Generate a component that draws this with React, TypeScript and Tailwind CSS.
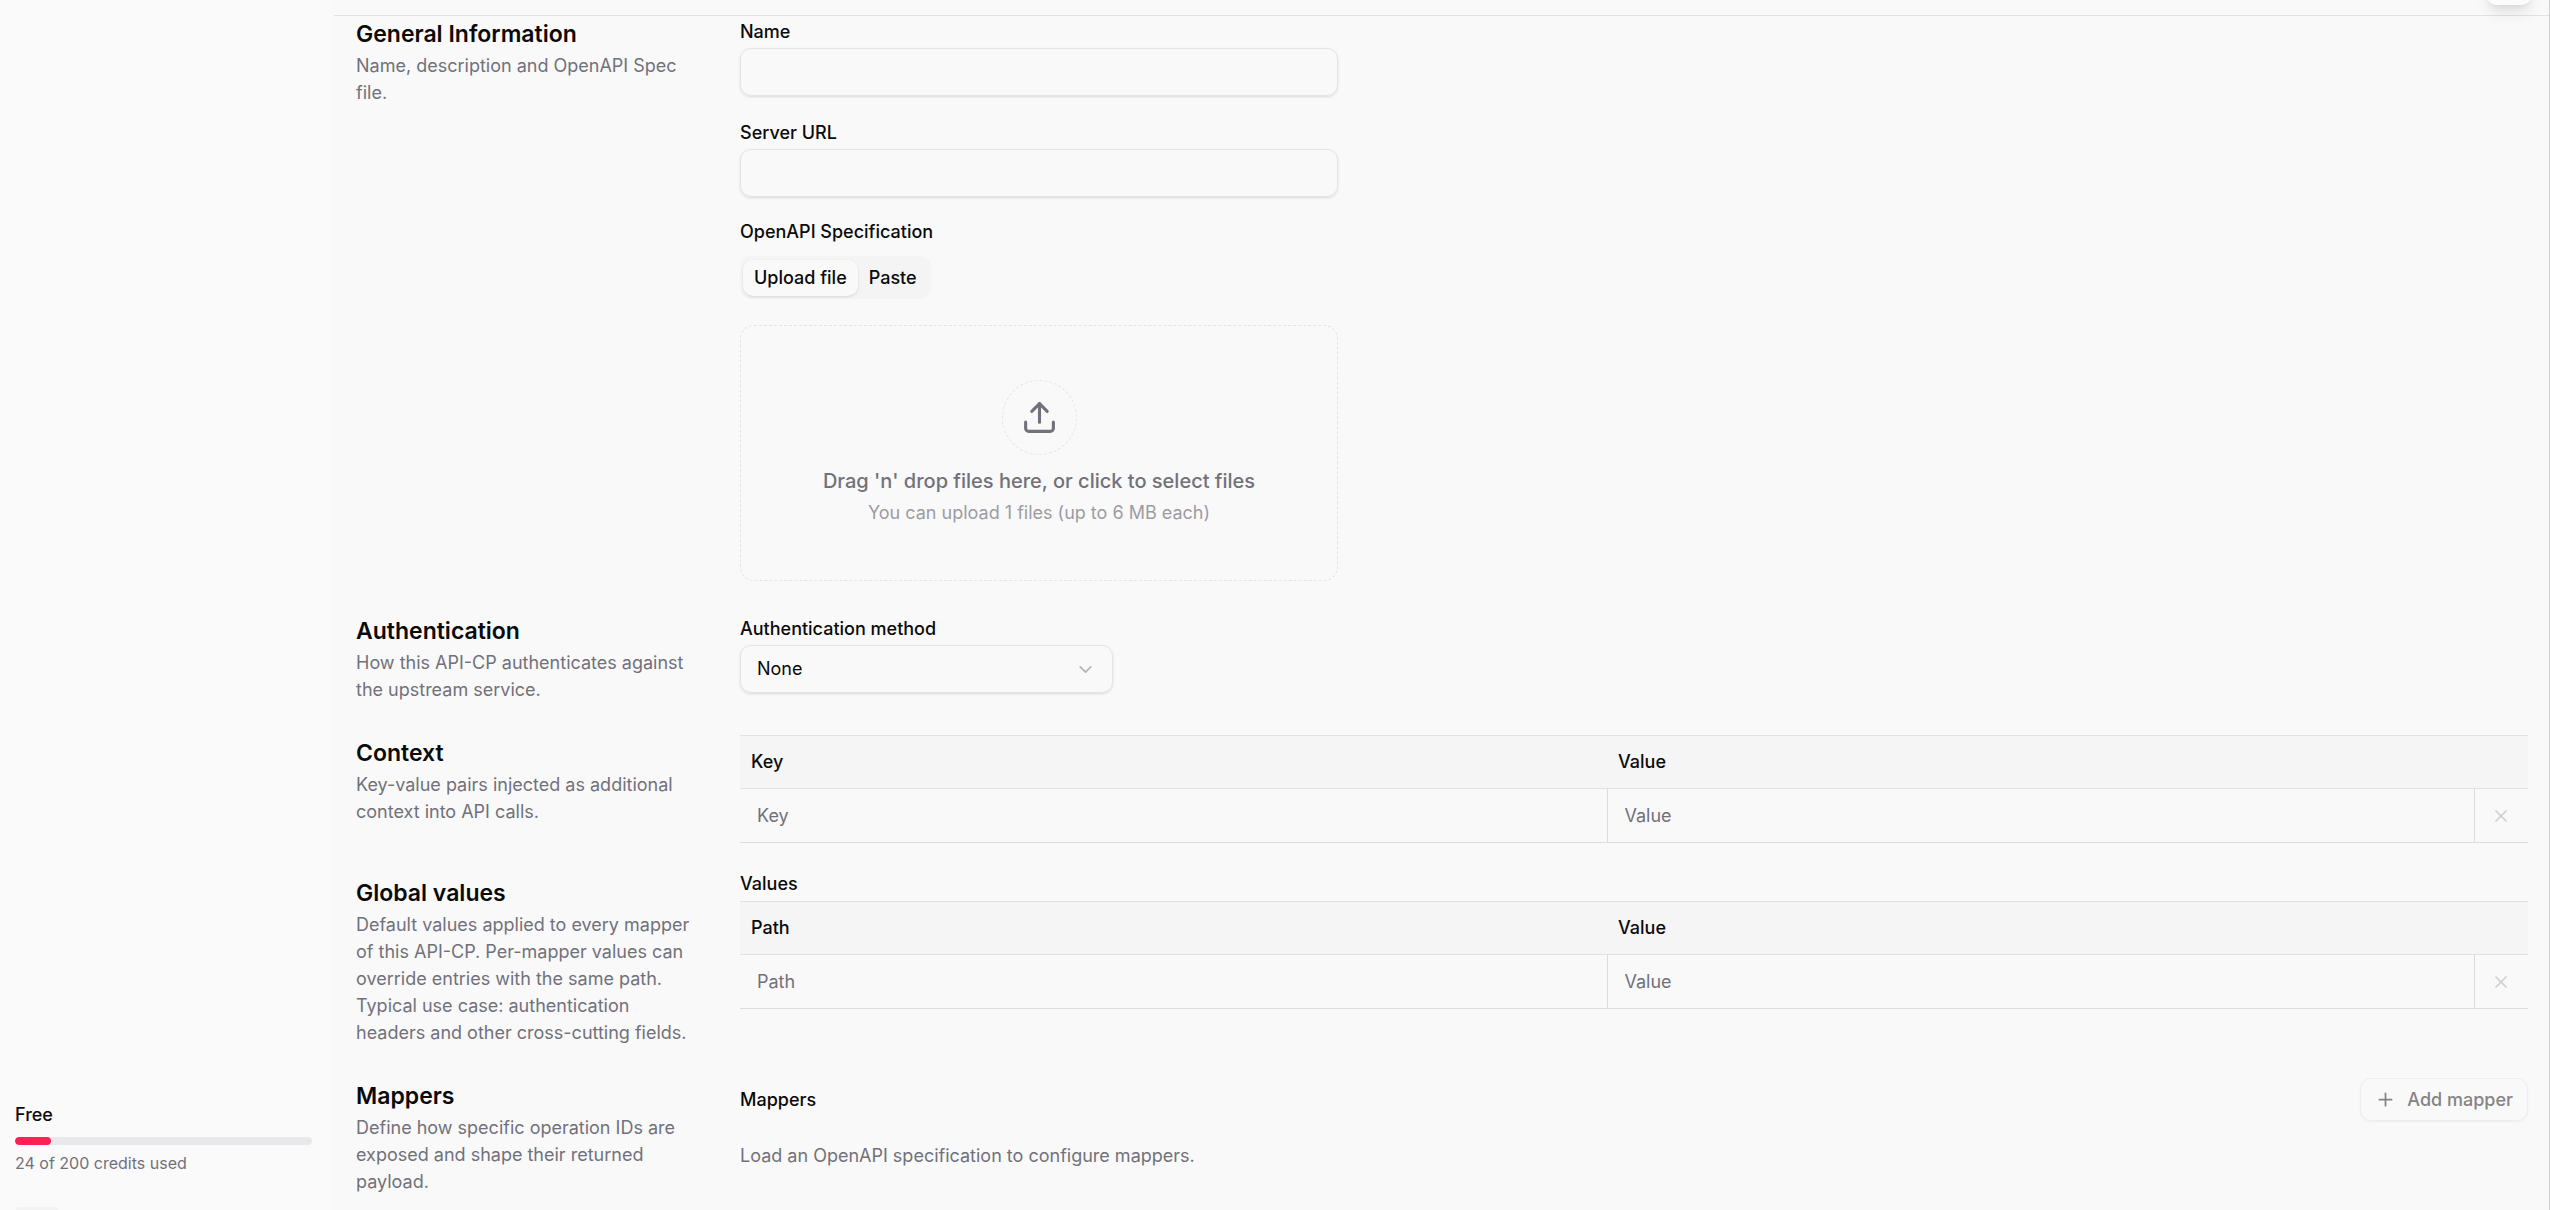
import { useState, type ReactNode } from "react";
import { ChevronDown, Plus, Upload, X } from "lucide-react";

function Section({
  title,
  description,
  children,
}: {
  title: string;
  description: string;
  children: ReactNode;
}) {
  return (
    <section className="grid grid-cols-[341px_minmax(0,1fr)] gap-x-[43px]">
      <div>
        <h2 className="text-[23px] leading-9 font-semibold text-[#0a0a0b]">{title}</h2>
        <p className="text-lg leading-[27px] text-[#71717b]">{description}</p>
      </div>
      <div className="min-w-0">{children}</div>
    </section>
  );
}

function TextField({ id, label }: { id: string; label: string }) {
  return (
    <div className="max-w-[598px]">
      <label htmlFor={id} className="block text-lg leading-8 font-medium">
        {label}
      </label>
      <input
        id={id}
        type="text"
        className="block h-12 w-full rounded-[11px] border border-[#e4e4e5] bg-transparent px-4 text-lg shadow-sm outline-none"
      />
    </div>
  );
}

function PairTable({ first, second }: { first: string; second: string }) {
  return (
    <table className="w-full table-fixed border-collapse text-lg">
      <thead>
        <tr className="h-[53px] border-y border-[#e2e2e3] bg-[#f5f5f5]">
          <th className="px-[11px] text-left font-medium">{first}</th>
          <th className="px-[11px] text-left font-medium">{second}</th>
          <th className="w-[54px]" aria-label="Actions" />
        </tr>
      </thead>
      <tbody>
        <tr className="h-[54px] border-b border-[#dcdcdd]">
          <td className="border-r border-[#dcdcdd] p-0">
            <input
              aria-label={first}
              placeholder={first}
              className="block h-[53px] w-full bg-transparent px-[17px] outline-none placeholder:text-[#71717b]"
            />
          </td>
          <td className="border-r border-[#dcdcdd] p-0">
            <input
              aria-label={second}
              placeholder={second}
              className="block h-[53px] w-full bg-transparent px-[17px] outline-none placeholder:text-[#71717b]"
            />
          </td>
          <td className="p-0">
            <button
              type="button"
              disabled
              aria-label="Remove row"
              className="flex h-[51px] w-full items-center justify-center text-[#cfcfd0]"
            >
              <X size={20} strokeWidth={2} />
            </button>
          </td>
        </tr>
      </tbody>
    </table>
  );
}

function Sidebar() {
  const used = 24;
  const total = 200;
  return (
    <aside className="flex w-[334px] shrink-0 flex-col justify-end bg-[#fafafa] pr-[22px] pl-[15px]">
      <div className="text-lg leading-6 font-medium">Free</div>
      <div
        role="progressbar"
        aria-label="Credits used"
        aria-valuenow={used}
        aria-valuemax={total}
        className="mt-2.5 h-2 w-full overflow-hidden rounded-full bg-[#e9e9eb]"
      >
        <div
          className="h-full rounded-full bg-[#ff2056]"
          style={{ width: `${(used / total) * 100}%` }}
        />
      </div>
      <div className="mt-1.5 text-base leading-6 text-[#71717b]">
        {used} of {total} credits used
      </div>
      <div className="mt-8 ml-px h-[3px] w-[42px] rounded-t-sm bg-[#f3f3f4]" />
    </aside>
  );
}

export default function App() {
  const [tab, setTab] = useState<"upload" | "paste">("upload");
  const active = "bg-[#f9f9f9] shadow-sm";

  return (
    <div className="flex h-screen overflow-hidden bg-[#f9f9f9] font-['Inter','Liberation_Sans',sans-serif] text-[#0a0a0b]">
      <Sidebar />
      <main className="relative min-w-0 flex-1 border-r border-[#cfcfcf]">
        <header className="h-4 border-b border-[#e2e2e3]" />
        <button
          type="button"
          aria-label="Open assistant"
          className="absolute -top-10 right-[17px] h-[45px] w-[46px] rounded-[11px] bg-[#fcfcfc] shadow-lg"
        />
        <form className="flex flex-col gap-8 pr-[21px] pl-[22px]">
          <Section title="General Information" description="Name, description and OpenAPI Spec file.">
            <div className="flex flex-col gap-[21px]">
              <TextField id="name" label="Name" />
              <TextField id="server-url" label="Server URL" />
              <div className="max-w-[598px]">
                <div className="text-lg leading-[27px] font-medium">OpenAPI Specification</div>
                <div
                  role="tablist"
                  className="mt-[11px] inline-flex h-[43px] items-center rounded-[11px] bg-[#f4f4f4] p-[3px] text-lg font-medium"
                >
                  <button
                    type="button"
                    role="tab"
                    aria-selected={tab === "upload"}
                    onClick={() => setTab("upload")}
                    className={`h-9 rounded-[10px] px-[11px] ${tab === "upload" ? active : ""}`}
                  >
                    Upload file
                  </button>
                  <button
                    type="button"
                    role="tab"
                    aria-selected={tab === "paste"}
                    onClick={() => setTab("paste")}
                    className={`h-9 rounded-[10px] px-[11px] ${tab === "paste" ? active : ""}`}
                  >
                    Paste
                  </button>
                </div>
                <button
                  type="button"
                  className="mt-[26px] flex h-64 w-full flex-col items-center justify-center rounded-[14px] border border-dashed border-[#e4e4e5]"
                >
                  <span className="flex size-[75px] items-center justify-center rounded-full border border-dashed border-[#e4e4e5] text-[#71717b]">
                    <Upload size={37} strokeWidth={2} />
                  </span>
                  <span className="mt-2.5 text-xl leading-8 font-medium text-[#71717b]">
                    Drag 'n' drop files here, or click to select files
                  </span>
                  <span className="mt-0.5 text-lg leading-7 text-[#9c9ca3]">
                    You can upload 1 files (up to 6 MB each)
                  </span>
                </button>
              </div>
            </div>
          </Section>

          <Section
            title="Authentication"
            description="How this API-CP authenticates against the upstream service."
          >
            <label htmlFor="auth-method" className="block text-lg leading-8 font-medium">
              Authentication method
            </label>
            <div className="relative max-w-[373px]">
              <select
                id="auth-method"
                className="block h-12 w-full appearance-none rounded-[11px] border border-[#e4e4e5] bg-transparent px-4 text-lg shadow-sm outline-none"
              >
                <option>None</option>
              </select>
              <ChevronDown
                size={21}
                strokeWidth={2}
                className="pointer-events-none absolute top-[14px] right-[17px] text-[#b5b5b8]"
              />
            </div>
          </Section>

          <Section
            title="Context"
            description="Key-value pairs injected as additional context into API calls."
          >
            <PairTable first="Key" second="Value" />
          </Section>

          <Section
            title="Global values"
            description="Default values applied to every mapper of this API-CP. Per-mapper values can override entries with the same path. Typical use case: authentication headers and other cross-cutting fields."
          >
            <h3 className="mb-2 text-lg leading-[18px] font-medium">Values</h3>
            <PairTable first="Path" second="Value" />
          </Section>

          <Section
            title="Mappers"
            description="Define how specific operation IDs are exposed and shape their returned payload."
          >
            <div className="flex items-center justify-between">
              <h3 className="text-lg font-medium">Mappers</h3>
              <button
                type="button"
                disabled
                className="flex h-[43px] items-center gap-[11px] rounded-[11px] border border-[#eeeeef] px-[14px] text-lg font-medium text-[#848485] shadow-xs"
              >
                <Plus size={21} strokeWidth={2} />
                Add mapper
              </button>
            </div>
            <p className="mt-[21px] text-lg leading-[27px] text-[#71717b]">
              Load an OpenAPI specification to configure mappers.
            </p>
          </Section>
        </form>
      </main>
    </div>
  );
}
